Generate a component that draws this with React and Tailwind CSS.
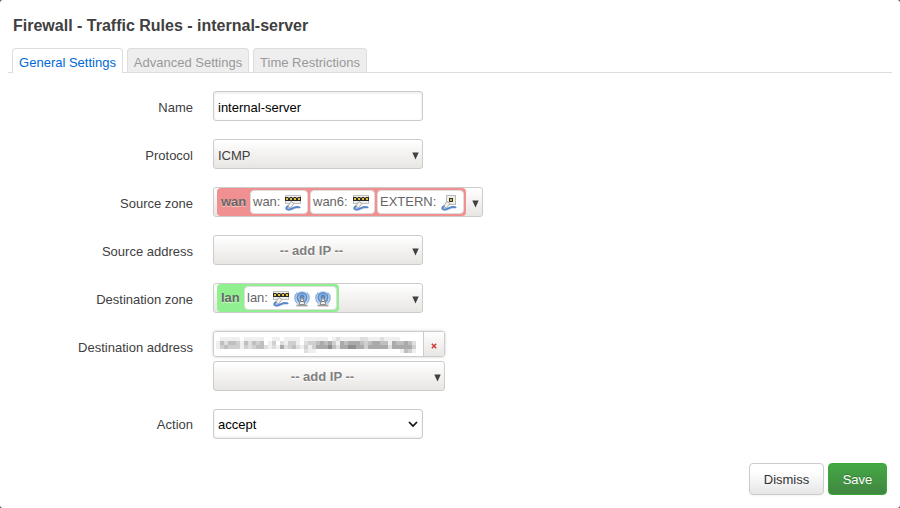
import React from "react";

const BOX = "border border-[#ccc] rounded-[3px]";
const GRAD = "bg-linear-to-b from-white to-[#e8e6e3]";

function Row({ label, children, h = "h-12", pad = "pt-2" }) {
  return (
    <div className={`flex items-start ${h}`}>
      <div className={`w-[193px] shrink-0 text-right leading-[18px] mr-5 ${pad}`}>{label}</div>
      {children}
    </div>
  );
}

function Tri() {
  return (
    <svg className="shrink-0" width="7" height="8" viewBox="0 0 7 8">
      <path d="M.3.5h6.400L3.500 7.500z" fill="#404040" />
    </svg>
  );
}

function Plug({ small }) {
  return (
    <svg width="16" height="16" viewBox="0 0 16 16" className="shrink-0">
      {small ? (
        <>
          <rect x="5.5" y="0.5" width="9" height="9" fill="#eeeeea" stroke="#b9b9b5" />
          <rect x="8" y="3" width="4" height="4" fill="#333" />
          <rect x="9" y="4" width="2" height="2" fill="#d6bb35" />
        </>
      ) : (
        <>
          <rect x="0.5" y="0.5" width="15" height="8" fill="#eeeeea" stroke="#c0c0bc" />
          <path d="M0 2h16v4H0z" fill="#2c2c2c" />
          <path d="M1 3h2v2H1zM5 3h2v2H5zM9 3h2v2H9zM13 3h2v2h-2z" fill="#dfc43c" />
          <path d="M3.500 2h1v1h-1zM7.500 2h1v1h-1zM11.500 2h1v1h-1z" fill="#eeeeea" />
        </>
      )}
      <path d="M6 6.500l3 2-3.500 4.500-3-1.500z" fill="#f2f2f0" stroke="#999" strokeWidth=".8" />
      <path d="M3.500 11C1 12 .5 14.300 3 14.500c4 .4 5-2 8-2.300 2-.2 3 .5 4-.5" fill="none" stroke="#5d89c9" strokeWidth="2.200" />
    </svg>
  );
}

function Wifi() {
  return (
    <svg width="16" height="16" viewBox="0 0 16 16" className="shrink-0" fill="none">
      <circle cx="8" cy="7" r="7" fill="#c5daf0" />
      <path d="M3.500 12.500a7 7 0 0 1 0-11M12.500 12.500a7 7 0 0 0 0-11" stroke="#8fb3dc" strokeWidth="1.400" />
      <circle cx="8" cy="6.500" r="4.800" fill="#8fb5e0" stroke="#5a8cc9" strokeWidth="1.400" />
      <circle cx="8" cy="6" r="2.400" fill="#5686c4" />
      <path d="M8 5.500L5 13.500h6z" fill="#eee" stroke="#858585" strokeWidth="1" />
      <path d="M6.500 10.500h3" stroke="#777" />
      <path d="M2.500 14.500h11" stroke="#a0a0a0" strokeWidth="1.800" />
    </svg>
  );
}

function Net({ name, width, children }) {
  return (
    <span className={`flex items-center h-[24px] bg-white rounded-[4px] border border-[#ddd] pl-[2px] ${width}`}>
      <span className="mr-[5px] text-[#666]">{name}</span>
      <span className="flex gap-[5px] pt-[2px]">{children}</span>
    </span>
  );
}

const MOSAIC = [
  "01111101111100110111101111110121111122111211110000",
  "14244314243401302133102334545315455543455441544542",
  "13433313234421215234213135556425566553555552555553",
  "00000000000000000000002110000000000000000000001431",
];
const SHADES = ["bg-transparent", "bg-[#efefef]", "bg-[#dedede]", "bg-[#cfcfcf]", "bg-[#bfbfbf]", "bg-[#aaaaaa]", "bg-[#8e8e8e]"];

function Mosaic() {
  return (
    <div className="ml-[2px] mt-[5px] w-[200px]" aria-hidden="true">
      {MOSAIC.map((r, i) => (
        <div key={i} className="flex h-[4px]">
          {r.split("").map((c, j) => (
            <div key={j} className={`flex-1 ${SHADES[Number(c)]}`} />
          ))}
        </div>
      ))}
    </div>
  );
}

function AddIp({ width }) {
  return (
    <div className={`${BOX} ${GRAD} ${width} h-[30px] flex items-center pl-1 pr-[3px] pt-[2px]`}>
      <span className="flex-1 text-center font-bold text-[#808080] pr-[7px] [text-shadow:0_1px_1px_white]">-- add IP --</span>
      <span className="pt-[2px]"><Tri /></span>
    </div>
  );
}

export default function App() {
  return (
    <div className="w-[900px] h-[508px] bg-[#505050] overflow-hidden font-['Liberation_Sans',Arial,sans-serif] text-[13px] leading-[18px] text-[#404040]">
      <div className="w-full h-full bg-white rounded-[3px] flex flex-col">
        <h4 className="text-base font-bold leading-9 ml-[13px] mt-2 h-10">Firewall - Traffic Rules - internal-server</h4>
        <div className="flex items-end mx-2 h-[25px] border-b border-[#ddd] pl-1 gap-1">
          <div className="w-[111px] h-[25px] -mb-px border border-b-0 border-[#ddd] bg-white rounded-t-[4px] text-center text-[#0069d6] pt-[5px]">General Settings</div>
          <div className="w-[122px] h-[24px] border border-b-0 border-[#ddd] bg-[#eee] rounded-t-[4px] text-center text-[#999] pt-[5px]">Advanced Settings</div>
          <div className="w-[114px] h-[24px] border border-b-0 border-[#ddd] bg-[#eee] rounded-t-[4px] text-center text-[#999] pt-[5px]">Time Restrictions</div>
        </div>
        <div className="pt-[18px] flex flex-col">
          <Row label="Name">
            <div className={`${BOX} w-[210px] h-[30px] px-1 pt-[7px] text-black shadow-[inset_0_1px_3px_rgba(0,0,0,0.1)]`}>internal-server</div>
          </Row>
          <Row label="Protocol">
            <div className={`${BOX} ${GRAD} w-[210px] h-[30px] flex items-center justify-between pl-1 pr-[3px] pt-[3px]`}>
              ICMP
              <span className="pt-px"><Tri /></span>
            </div>
          </Row>
          <Row label="Source zone">
            <div className={`${BOX} ${GRAD} w-[270px] h-[30px] flex items-center justify-between pl-[3px] pr-[3px]`}>
              <span className="flex items-center gap-[2px] w-[249px] h-[28px] rounded-[4px] bg-[#f09090] pl-1 pr-[2px]">
                <b className="w-[27px] text-[#666] [text-shadow:0_1px_1px_rgba(255,255,255,0.6)]">wan</b>
                <Net name="wan:" width="w-[58px]"><Plug /></Net>
                <Net name="wan6:" width="w-[65px]"><Plug /></Net>
                <Net name="EXTERN:" width="w-[87px]"><Plug small /></Net>
              </span>
              <span className="pt-1"><Tri /></span>
            </div>
          </Row>
          <Row label="Source address"><AddIp width="w-[210px]" /></Row>
          <Row label="Destination zone">
            <div className={`${BOX} ${GRAD} w-[210px] h-[30px] flex items-center justify-between pl-[3px] pr-[3px]`}>
              <span className="flex items-center w-[122px] h-[28px] rounded-[4px] bg-[#90f090] pl-1 pr-[2px]">
                <b className="w-[23px] text-[#666] [text-shadow:0_1px_1px_rgba(255,255,255,0.6)]">lan</b>
                <Net name="lan:" width="w-[93px]"><Plug /><Wifi /><Wifi /></Net>
              </span>
              <span className="pt-1"><Tri /></span>
            </div>
          </Row>
          <Row label="Destination address" h="h-[78px]">
            <div className="flex flex-col gap-1">
              <div className={`${BOX} flex w-[232px] h-[26px] shadow-[0_0_3px_#ccc] overflow-hidden`}>
                <div className="w-[210px] border-r border-[#ccc]"><Mosaic /></div>
                <div className={`${GRAD} flex-1 flex items-center justify-center pt-[3px] pr-px`}>
                  <svg width="6" height="6" viewBox="0 0 6 6"><path d="M.8.8l4.400 4.400M5.200.8L.8 5.200" stroke="#cc3a36" strokeWidth="1.500" /></svg>
                </div>
              </div>
              <AddIp width="w-[232px]" />
            </div>
          </Row>
          <Row label="Action" pad="pt-[7px]">
            <div className={`${BOX} w-[210px] h-[30px] flex items-center justify-between pl-1 pr-1 pt-px text-black shadow-[inset_0_-1px_3px_rgba(0,0,0,0.08)]`}>
              accept
              <svg width="10" height="7" viewBox="0 0 10 7"><path d="M1 1l4 4 4-4" fill="none" stroke="#111" strokeWidth="1.700" /></svg>
            </div>
          </Row>
        </div>
        <div className="flex justify-end gap-1 pr-[13px] pt-[6px]">
          <div className="w-[75px] h-8 rounded-[4px] border border-[#ccc] bg-linear-to-b from-white from-25% to-[#e6e6e6] text-center pt-[7px] text-[#333] shadow-[0_1px_2px_rgba(0,0,0,0.05)]">Dismiss</div>
          <div className="w-[59px] h-8 rounded-[4px] border border-[#3ba83b] bg-linear-to-b from-[#44a844] to-[#418641] text-center pt-[7px] text-white [text-shadow:0_-1px_0_rgba(0,0,0,0.25)]">Save</div>
        </div>
      </div>
    </div>
  );
}
